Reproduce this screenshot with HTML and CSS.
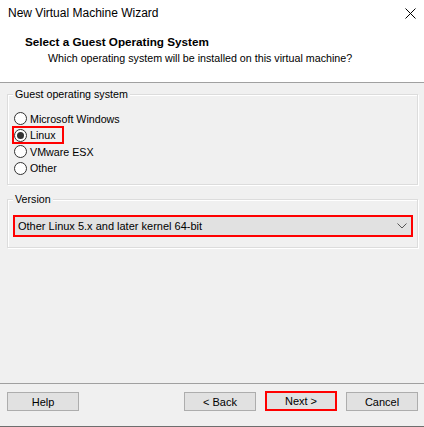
FILE: index.html
```html
<!DOCTYPE html>
<html lang="en">
<head>
    <meta charset="UTF-8">
    <meta name="viewport" content="width=device-width, initial-scale=1.0">
    <title>New Virtual Machine Wizard</title>
    <link rel="stylesheet" href="styles.css">
</head>
<body>
    <div class="window">
        <div class="header">
            <div class="titlebar">
                <span class="title">New Virtual Machine Wizard</span>
                <svg class="close" width="11" height="11" viewBox="0 0 11 11">
                    <path d="M0.5 0.5 L10.5 10.5 M10.5 0.5 L0.5 10.5" stroke="#000" stroke-width="1" fill="none"/>
                </svg>
            </div>
            <div class="heading">Select a Guest Operating System</div>
            <div class="subheading">Which operating system will be installed on this virtual machine?</div>
        </div>

        <div class="content">
            <div class="group group-os">
                <div class="group-title">Guest operating system</div>
                <div class="options">
                    <div class="option"><span class="choice"><span class="radio"></span>Microsoft Windows</span></div>
                    <div class="option"><span class="choice marked"><span class="radio checked"></span>Linux</span></div>
                    <div class="option"><span class="choice"><span class="radio"></span>VMware ESX</span></div>
                    <div class="option"><span class="choice"><span class="radio"></span>Other</span></div>
                </div>
            </div>

            <div class="group group-version">
                <div class="group-title">Version</div>
                <div class="select">
                    <span>Other Linux 5.x and later kernel 64-bit</span>
                    <svg width="10" height="6" viewBox="0 0 10 6">
                        <polyline points="0.5,0.5 5,5 9.5,0.5" stroke="#555" stroke-width="1" fill="none"/>
                    </svg>
                </div>
            </div>
        </div>

        <div class="footer">
            <button class="btn">Help</button>
            <button class="btn btn-back">&lt; Back</button>
            <button class="btn btn-next">Next &gt;</button>
            <button class="btn">Cancel</button>
        </div>
    </div>
</body>
</html>
```

FILE: styles.css
```css
body {
    margin: 0;
    background-color: #f0f0f0;
    font-family: 'Liberation Sans', Arial, sans-serif;
    font-size: 10.7px;
    color: #000;
}
.window {
    height: 427px;
    display: flex;
    flex-direction: column;
    border-bottom: 1px solid #6e6e6e;
    box-sizing: border-box;
}
.header {
    background-color: #fff;
    height: 83px;
    border-bottom: 1px solid #a0a0a0;
    box-sizing: border-box;
}
.titlebar {
    display: flex;
    justify-content: space-between;
    align-items: flex-start;
    padding: 5px 8px 0 8px;
}
.title {
    font-size: 12px;
    line-height: 16px;
}
.close {
    margin-top: 3px;
}
.heading {
    margin-top: 13px;
    padding-left: 25px;
    font-size: 11.7px;
    font-weight: bold;
    line-height: 15px;
}
.subheading {
    margin-top: 2px;
    padding-left: 48px;
    line-height: 15px;
}
.content {
    flex: 1;
    padding: 11px 6px 0 7px;
}
.group {
    border: 1px solid #dcdcdc;
    box-shadow: inset 1px 1px 0 #fff, 1px 1px 0 #fff;
}
.group-title {
    display: table;
    margin: -7px 0 0 5px;
    padding: 0 2px;
    background-color: #f0f0f0;
    line-height: 13px;
}
.group-os {
    padding-bottom: 7.6px;
}
.options {
    margin: 9.8px 0 0 6px;
}
.option {
    height: 16.4px;
    display: flex;
    align-items: center;
}
.choice {
    display: inline-flex;
    align-items: center;
    gap: 3px;
    height: 14px;
}
.choice.marked {
    outline: 2px solid #f00;
    padding-right: 6px;
}
.radio {
    width: 13px;
    height: 13px;
    box-sizing: border-box;
    border: 1px solid #333;
    border-radius: 50%;
    background-color: #fff;
    display: flex;
    align-items: center;
    justify-content: center;
}
.radio.checked::after {
    content: '';
    width: 7px;
    height: 7px;
    border-radius: 50%;
    background-color: #333;
}
.group-version {
    margin-top: 14px;
    padding-bottom: 12px;
}
.select {
    margin: 11px 6px 0 7px;
    height: 18px;
    padding: 0 4px 0 3px;
    display: flex;
    align-items: center;
    justify-content: space-between;
    font-size: 11px;
    background-color: #e1e1e1;
    outline: 2px solid #f00;
}
.footer {
    border-top: 1px solid #a0a0a0;
    height: 34px;
    display: flex;
    align-items: flex-start;
    gap: 9px;
    padding: 8px 6px 0 7px;
}
.btn {
    width: 72px;
    height: 19px;
    padding: 0;
    font-family: inherit;
    font-size: 11px;
    color: #000;
    background-color: #e1e1e1;
    border: 1px solid #adadad;
    box-sizing: border-box;
}
.btn-back {
    margin-left: auto;
}
.btn-next {
    height: 20px;
    margin-top: -1px;
    border: 2px solid #f00;
}
```
